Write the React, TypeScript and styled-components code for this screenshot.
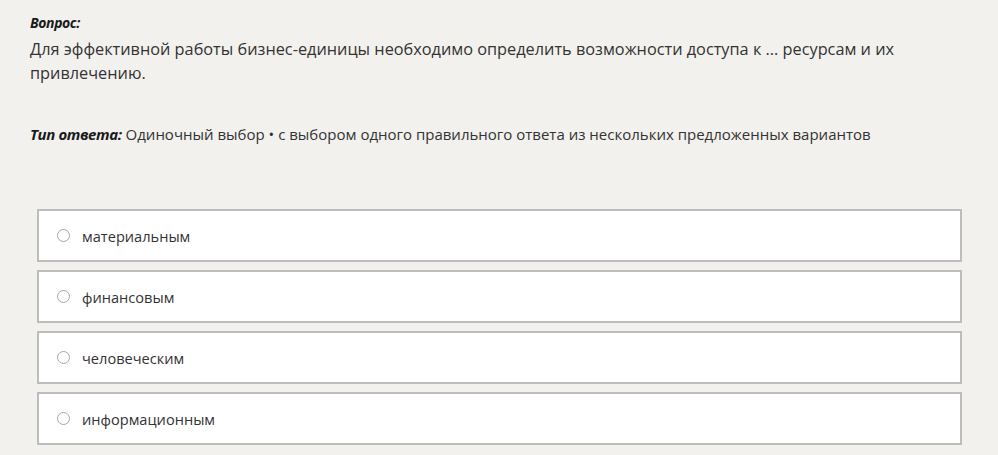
import styled, { createGlobalStyle } from "styled-components";

const GlobalStyle = createGlobalStyle`
  html, body {
    margin: 0;
    padding: 0;
    background: #f2f1ee;
  }
  body {
    font-family: "Open Sans", "Noto Sans", sans-serif;
    color: #333;
  }
`;

const Page = styled.div`
  padding: 13px 36px 0 30px;
`;

const Label = styled.div`
  font-size: 14px;
  line-height: 20px;
  font-weight: 700;
  font-style: italic;
  color: #1a1a1a;
  letter-spacing: -0.4px;
`;

const Question = styled.p`
  margin: 4px 0 0;
  font-size: 16.3px;
  line-height: 24px;
  max-width: 900px;
`;

const TypeLine = styled.p`
  margin: 38px 0 0;
  font-size: 15px;
  line-height: 22px;

  b {
    font-style: italic;
    color: #1a1a1a;
    letter-spacing: -0.4px;
  }
`;

const Options = styled.div`
  display: flex;
  flex-direction: column;
  gap: 8px;
  margin: 64px 0 0 7px;
`;

const Option = styled.label`
  display: flex;
  align-items: center;
  gap: 12px;
  height: 49px;
  padding: 0 18px;
  background: #fff;
  border: 2px solid #bdbdbb;
  font-size: 14.6px;
  cursor: pointer;
`;

const Radio = styled.span`
  box-sizing: border-box;
  width: 13px;
  height: 13px;
  border: 1.6px solid #a6a6a6;
  border-radius: 50%;
  flex-shrink: 0;
`;

const options = ["материальным", "финансовым", "человеческим", "информационным"];

export default function App() {
  return (
    <Page>
      <GlobalStyle />
      <Label>Вопрос:</Label>
      <Question>
        Для эффективной работы бизнес-единицы необходимо определить возможности доступа к ... ресурсам и их
        привлечению.
      </Question>
      <TypeLine>
        <b>Тип ответа:</b> Одиночный выбор • с выбором одного правильного ответа из нескольких предложенных
        вариантов
      </TypeLine>
      <Options>
        {options.map((o) => (
          <Option key={o}>
            <Radio />
            {o}
          </Option>
        ))}
      </Options>
    </Page>
  );
}
